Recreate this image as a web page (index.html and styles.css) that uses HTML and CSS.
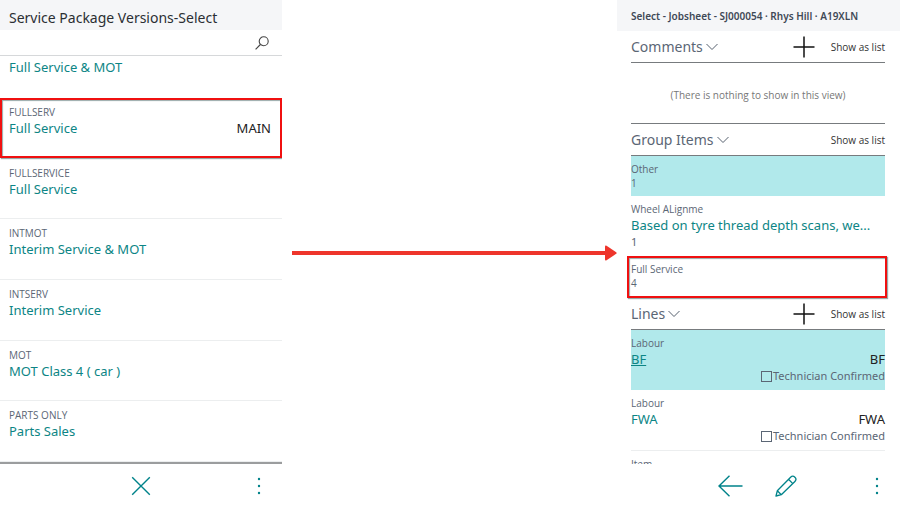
FILE: index.html
```html
<!DOCTYPE html>
<html lang="en">
<head>
<meta charset="utf-8">
<title>Service Package Versions</title>
<link rel="stylesheet" href="styles.css">
</head>
<body>
<main class="flow">
  <section class="screen">
    <header class="title-bar"><h1 class="title">Service Package Versions-Select</h1></header>
    <div class="search">
      <button class="icon-button" aria-label="Search"><svg width="14" height="14" viewBox="0 0 14 14" fill="none" stroke="#444" stroke-width="1.1"><circle cx="8.7" cy="5.3" r="4.5"/><path d="M5.4 8.5.6 13.3"/></svg></button>
    </div>
    <ul class="packages">
      <li class="package package-partial"><a class="name" href="#">Full Service &amp; MOT</a></li>
      <li class="package highlight"><span class="code">FULLSERV</span><div class="pair"><a class="name" href="#">Full Service</a><span class="value">MAIN</span></div></li>
      <li class="package"><span class="code">FULLSERVICE</span><a class="name" href="#">Full Service</a></li>
      <li class="package"><span class="code">INTMOT</span><a class="name" href="#">Interim Service &amp; MOT</a></li>
      <li class="package"><span class="code">INTSERV</span><a class="name" href="#">Interim Service</a></li>
      <li class="package"><span class="code">MOT</span><a class="name" href="#">MOT Class 4 ( car )</a></li>
      <li class="package"><span class="code">PARTS ONLY</span><a class="name" href="#">Parts Sales</a></li>
    </ul>
    <footer class="toolbar toolbar-lined">
      <span></span>
      <button class="icon-button" aria-label="Close"><svg width="20" height="20" viewBox="0 0 20 20" fill="none" stroke="#00838a" stroke-width="1.4"><path d="M1.2 1.2 18.8 18.8M18.8 1.2 1.2 18.8"/></svg></button>
      <button class="icon-button more" aria-label="More options"><svg width="4" height="18" viewBox="0 0 4 18" fill="#00838a"><circle cx="2" cy="2" r="1.2"/><circle cx="2" cy="9" r="1.2"/><circle cx="2" cy="16" r="1.2"/></svg></button>
    </footer>
  </section>

  <div class="connector">
    <span class="shaft"></span>
    <svg width="12" height="16" viewBox="0 0 12 16" fill="#ee352b"><path d="M0 1.5Q0 0 1.6 .8L11.2 7.2Q12.2 8 11.2 8.8L1.6 15.2Q0 16 0 14.5Z"/></svg>
  </div>

  <section class="screen">
    <header class="title-bar job-bar"><h1 class="job-title">Select - Jobsheet - SJ000054 · Rhys Hill · A19XLN</h1></header>
    <div class="job">
      <section>
        <div class="part-head">
          <h2 class="part-title">Comments</h2>
          <svg class="chevron" width="12" height="8" viewBox="0 0 12 8" fill="none" stroke="#56606e"><path d="M.5 1 6 6.5 11.5 1"/></svg>
          <button class="icon-button add" aria-label="Add comment"><svg width="22" height="22" viewBox="0 0 22 22" stroke="#111" stroke-width="1.5"><path d="M11 .5v21M.5 11h21"/></svg></button>
          <a class="as-list" href="#">Show as list</a>
        </div>
        <p class="empty">(There is nothing to show in this view)</p>
      </section>
      <section>
        <div class="part-head">
          <h2 class="part-title">Group Items</h2>
          <svg class="chevron" width="12" height="8" viewBox="0 0 12 8" fill="none" stroke="#56606e"><path d="M.5 1 6 6.5 11.5 1"/></svg>
          <a class="as-list" href="#">Show as list</a>
        </div>
        <ul class="rows">
          <li class="row selected"><span class="code">Other</span><span class="code">1</span></li>
          <li class="row row-tall"><span class="code">Wheel ALignme</span><a class="name" href="#">Based on tyre thread depth scans, we...</a><span class="count">1</span></li>
          <li class="row row-last highlight highlight-wide"><span class="code">Full Service</span><span class="code">4</span></li>
        </ul>
      </section>
      <section>
        <div class="part-head">
          <h2 class="part-title">Lines</h2>
          <svg class="chevron" width="12" height="8" viewBox="0 0 12 8" fill="none" stroke="#56606e"><path d="M.5 1 6 6.5 11.5 1"/></svg>
          <button class="icon-button add" aria-label="Add line"><svg width="22" height="22" viewBox="0 0 22 22" stroke="#111" stroke-width="1.5"><path d="M11 .5v21M.5 11h21"/></svg></button>
          <a class="as-list" href="#">Show as list</a>
        </div>
        <ul class="rows">
          <li class="row row-tall selected"><span class="code">Labour</span><div class="pair"><a class="name underlined" href="#">BF</a><span class="value">BF</span></div><label class="confirm"><input class="tick" type="checkbox">Technician Confirmed</label></li>
          <li class="row row-tall ruled"><span class="code">Labour</span><div class="pair"><a class="name" href="#">FWA</a><span class="value">FWA</span></div><label class="confirm"><input class="tick" type="checkbox">Technician Confirmed</label></li>
          <li class="row"><span class="code">Item</span></li>
        </ul>
      </section>
    </div>
    <footer class="toolbar job-toolbar">
      <button class="icon-button back" aria-label="Back"><svg width="25" height="22" viewBox="0 0 25 22" fill="none" stroke="#00838a" stroke-width="1.4"><path d="M24.5 11H1M11.5.7 1 11l10.500 10.300"/></svg></button>
      <button class="icon-button" aria-label="Edit"><svg width="22" height="22" viewBox="0 0 22 22" fill="none" stroke="#00838a" stroke-width="1.3" stroke-linejoin="round"><path d="M1 21 2.300 15.800 15.600 2.200a3 3 0 0 1 4.300 4.300L6.300 19.700zM2.300 15.800 6.300 19.700M13.500 4.300l4.300 4.300"/></svg></button>
      <button class="icon-button more" aria-label="More options"><svg width="4" height="18" viewBox="0 0 4 18" fill="#00838a"><circle cx="2" cy="2" r="1.2"/><circle cx="2" cy="9" r="1.2"/><circle cx="2" cy="16" r="1.2"/></svg></button>
    </footer>
  </section>
</main>
</body>
</html>
```
FILE: styles.css
```css
* { box-sizing: border-box; }
body {
  margin: 0;
  background: #fff;
  color: #5b6675;
  font-family: "Noto Sans", "Open Sans", sans-serif;
}
h1, h2, p, ul { margin: 0; padding: 0; font-weight: 400; }
ul { list-style: none; }
a { color: #0c8585; text-decoration: none; }
svg { display: block; }

.flow {
  display: grid;
  grid-template-columns: 282fr 335fr 283fr;
  height: 100vh;
}
.screen {
  display: flex;
  flex-direction: column;
  min-width: 0;
  min-height: 0;
}
.title-bar {
  display: flex;
  align-items: center;
  flex: none;
  height: 30px;
  padding: 6px 9px 0;
  background: #f5f6f8;
}
.job-bar { height: 31px; padding: 1px 14px 0; }
.title { color: #2b2f33; font-size: 14px; line-height: 20px; white-space: nowrap; }
.job-title { color: #3f4956; font-size: 10px; font-weight: 600; line-height: 16px; white-space: nowrap; }

.icon-button { padding: 0; border: 0; background: none; cursor: pointer; }
.search {
  display: flex;
  align-items: center;
  justify-content: flex-end;
  flex: none;
  height: 26px;
  padding-right: 13px;
  border-bottom: 1px solid #d6d8da;
}

.packages {
  display: grid;
  flex: 1;
  grid-template-rows: 42px repeat(6, 1fr);
  min-height: 0;
  overflow: hidden;
}
.package {
  display: flex;
  flex-direction: column;
  padding: 7px 9px 0;
  border-bottom: 1px solid #eceeef;
}
.package-partial { padding-top: 2px; border-bottom: 0; }
.highlight { position: relative; border-bottom-color: transparent; }
.highlight::after {
  content: "";
  position: absolute;
  inset: 0;
  border: 2px solid #f01010;
  box-shadow: 1px 1px 1px #9aa, inset 1px 1px 1px #9aa;
  pointer-events: none;
}
.highlight-wide::after { inset: 0 -2px 0 -4px; }

.code, .as-list, .empty { font-family: "Open Sans", "Noto Sans", sans-serif; }
.code { font-size: 10px; line-height: 14px; }
.name, .value { font-size: 13px; line-height: 18px; white-space: nowrap; }
.value { color: #222; }
.underlined { text-decoration: underline; }
.pair { display: flex; justify-content: space-between; }
.package .pair { padding-right: 2px; }

.toolbar {
  display: grid;
  grid-template-columns: 1fr auto 1fr;
  align-items: center;
  flex: none;
  height: 42px;
  padding-top: 2px;
}
.toolbar-lined { height: 44px; border-top: 2px solid #9b9d9e; }
.more { justify-self: end; margin-right: 21px; }
.back { justify-self: end; margin-right: 32px; }
.job-toolbar { grid-template-columns: 158fr 22px 103fr; }

.connector { display: flex; align-items: center; padding-left: 10px; }
.shaft { flex: 1; height: 4px; background: #ee352b; }

.job { flex: 1; min-height: 0; padding: 0 15px 0 14px; overflow: hidden; }
.part-head {
  display: flex;
  align-items: center;
  height: 32px;
  border-bottom: 1px solid #777b7e;
}
.part-title { font-size: 14px; line-height: 20px; }
.chevron { margin-left: 3px; }
.add { margin-left: auto; margin-right: 16px; }
.as-list { color: #333; font-size: 10px; line-height: 16px; }
.chevron + .as-list { margin-left: auto; }
.empty {
  padding: 24px 0 20px;
  border-bottom: 1px solid #777b7e;
  color: #777;
  font-size: 10px;
  line-height: 16px;
  text-align: center;
}
.row { display: flex; flex-direction: column; height: 40px; padding-top: 6px; }
.row-tall { height: 60px; }
.row-last { height: 42px; }
.selected { background: #b1e9eb; }
.ruled { height: 61px; border-bottom: 1px solid #eceeef; }
.count { font-size: 11px; line-height: 16px; }
.confirm {
  display: flex;
  align-items: center;
  justify-content: flex-end;
  font-size: 11px;
  line-height: 16px;
  white-space: nowrap;
}
.tick {
  appearance: none;
  width: 11px;
  height: 11px;
  margin: 0 1px 0 0;
  border: 1px solid #5b6675;
}
```
